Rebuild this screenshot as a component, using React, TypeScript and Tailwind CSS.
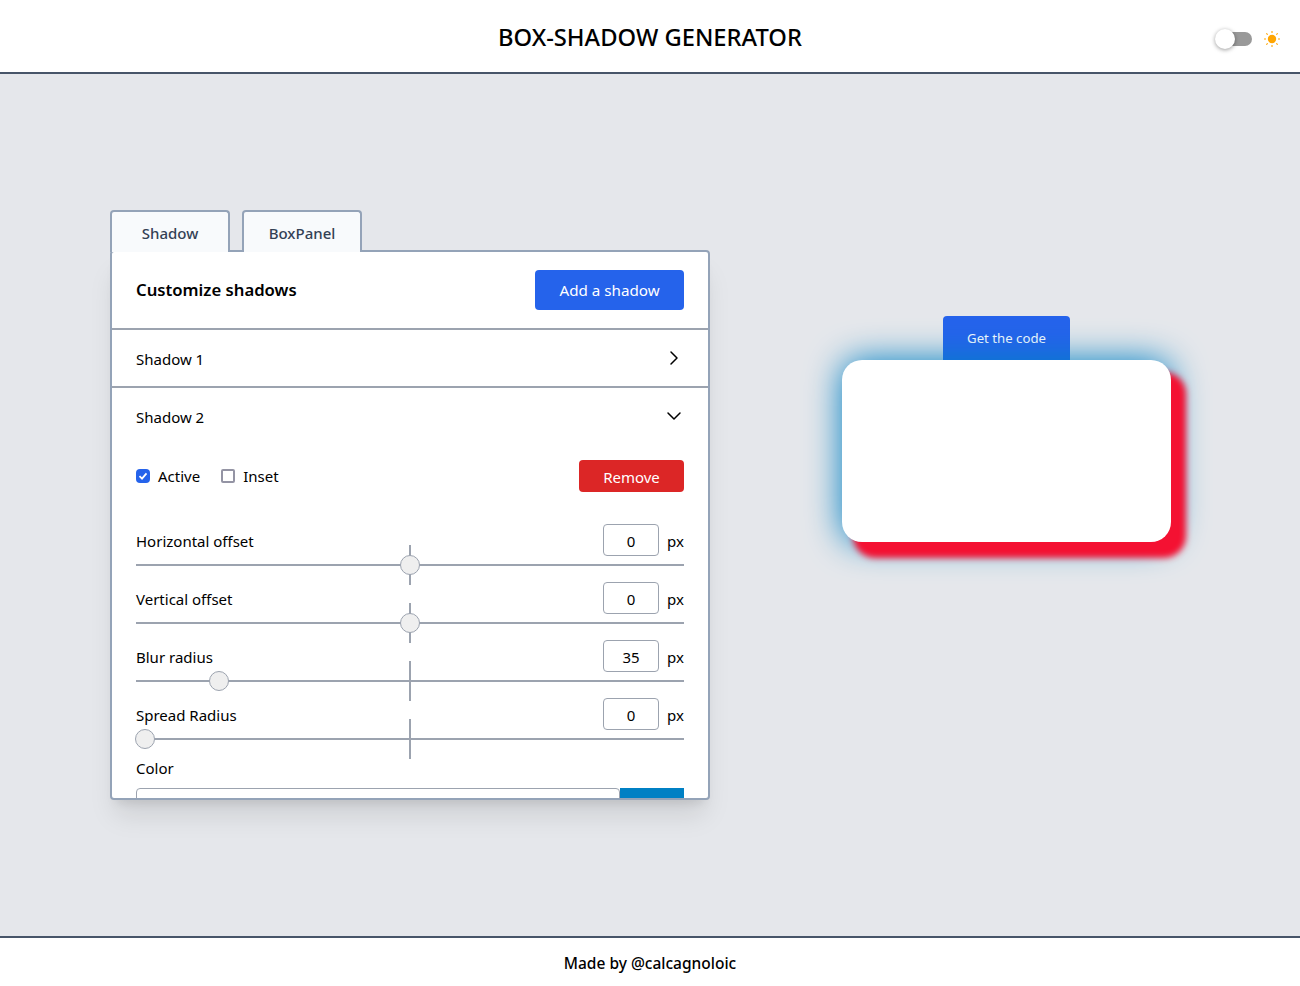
import { ChevronDown, ChevronRight } from "lucide-react";

const SLIDERS = [
  { label: "Horizontal offset", value: "0", thumb: "left-[264px]" },
  { label: "Vertical offset", value: "0", thumb: "left-[264px]" },
  { label: "Blur radius", value: "35", thumb: "left-[73px]" },
  { label: "Spread Radius", value: "0", thumb: "-left-px" },
];

function SliderRow({ label, value, thumb }: { label: string; value: string; thumb: string }) {
  return (
    <div className="mb-[7px]">
      <div className="flex h-8 items-center">
        <span className="flex-1 pt-0.5">{label}</span>
        <div className="flex h-8 w-14 items-center justify-center rounded border border-[#9ca3af] bg-white pt-0.5">{value}</div>
        <span className="ml-2 w-[17px] pt-0.5">px</span>
      </div>
      <div className="relative -mt-px h-5">
        <div className="absolute left-0 right-0 top-[9px] h-0.5 bg-[#9ca3af]" />
        <div className="absolute left-[273px] top-[-10px] h-10 w-0.5 bg-[#9ca3af]" />
        <div className={`absolute top-0 h-5 w-5 rounded-full border border-[#9ca3af] bg-[#efefef] ${thumb}`} />
      </div>
    </div>
  );
}

function Sun() {
  return (
    <svg width="16" height="16" viewBox="0 0 16 16" className="text-[#ffa500]">
      <circle cx="8" cy="8" r="4.2" fill="currentColor" />
      <g stroke="currentColor" strokeWidth="1.1">
        <path d="M8 0v2M8 14v2M0 8h2M14 8h2M2.3 2.3l1.4 1.4M12.3 12.3l1.4 1.4M2.3 13.7l1.4-1.4M12.3 3.7l1.4-1.4" />
      </g>
    </svg>
  );
}

export default function App() {
  return (
    <div className="flex h-[986px] flex-col bg-white font-['Noto_Sans',sans-serif] text-[15px] text-black">
      <header className="grid h-[74px] shrink-0 grid-cols-3 items-center border-b-2 border-[#475569] bg-white">
        <div />
        <h1 className="pt-1 text-center text-[23.75px] font-medium whitespace-nowrap">BOX-SHADOW GENERATOR</h1>
        <div className="mt-1.5 flex items-center justify-end pr-5">
          <div className="relative mr-3 h-3.5 w-[35px] rounded-full bg-[#999999]">
            <div className="absolute -left-0.5 -top-[3px] h-5 w-5 rounded-full bg-white shadow-[0_1px_4px_rgba(0,0,0,0.4)]" />
          </div>
          <Sun />
        </div>
      </header>

      <main className="flex flex-1 items-center bg-[#e5e7eb] pl-[110px]">
        <section className="w-[600px]">
          <div className="relative z-10 -mb-0.5 flex gap-3">
            <div className="flex h-[42px] w-[120px] items-center justify-center rounded-t border-2 border-b-0 border-[#94a3b8] bg-[#f8fafc] pt-0.5 font-medium text-[#334155]">
              Shadow
            </div>
            <div className="flex h-[42px] w-[120px] items-center justify-center rounded-t border-2 border-b-0 border-[#94a3b8] bg-[#f8fafc] pt-0.5 font-medium text-[#334155]">
              BoxPanel
            </div>
          </div>
          <div className="h-[550px] overflow-hidden rounded border-2 border-[#94a3b8] bg-white shadow-xl">
            <div className="flex h-[78px] items-center justify-between border-b-2 border-[#9ca3af] px-6">
              <h2 className="text-[16.7px] font-semibold">Customize shadows</h2>
              <button className="h-10 w-[149px] rounded bg-[#2563eb] pt-px text-[15.2px] text-white">Add a shadow</button>
            </div>
            <div className="flex h-[58px] items-center justify-between border-b-2 border-[#9ca3af] px-6">
              <span className="pt-0.5">Shadow 1</span>
              <ChevronRight className="-mr-0.5 h-6 w-6" strokeWidth={1.5} />
            </div>
            <div className="px-6">
              <div className="flex h-14 items-center justify-between">
                <span className="pt-0.5">Shadow 2</span>
                <ChevronDown className="-mr-0.5 h-6 w-6" strokeWidth={1.5} />
              </div>
              <div className="mt-4 mb-8 flex h-8 items-center">
                <span className="mr-2 flex h-3.5 w-3.5 items-center justify-center rounded-sm bg-[#2563eb]">
                  <svg width="10" height="10" viewBox="0 0 10 10" fill="none" stroke="white" strokeWidth="1.8">
                    <path d="M1.5 5.2 4 7.6 8.5 2.4" />
                  </svg>
                </span>
                <span className="pt-px">Active</span>
                <span className="ml-[21px] mr-2 h-3.5 w-3.5 rounded-[2px] border-2 border-[#9494a4]" />
                <span className="flex-1 pt-px">Inset</span>
                <button className="h-8 w-[105px] rounded bg-[#dc2626] pt-0.5 text-white">Remove</button>
              </div>
              {SLIDERS.map((s) => (
                <SliderRow key={s.label} {...s} />
              ))}
              <div className="mt-[3px] flex">
                <span className="pt-px">Color</span>
              </div>
              <div className="mt-2 flex h-8">
                <div className="flex-1 rounded border border-[#9ca3af]" />
                <div className="w-16 bg-[#0080c4]" />
              </div>
            </div>
          </div>
        </section>

        <section className="mb-[152px] ml-[132px] flex w-[329px] flex-col items-center">
          <button className="h-11 w-[127px] rounded-t bg-[#2563eb] pt-0.5 text-[13.2px] text-white">Get the code</button>
          <div className="h-[182px] w-full rounded-[20px] bg-white shadow-[13px_14px_6px_2px_#f41132,0_0_35px_#0080c4]" />
        </section>
      </main>

      <footer className="flex h-[50px] shrink-0 items-center justify-center border-t-2 border-[#475569] bg-white pt-1 text-[15.5px] font-medium">
        Made by @calcagnoloic
      </footer>
    </div>
  );
}
